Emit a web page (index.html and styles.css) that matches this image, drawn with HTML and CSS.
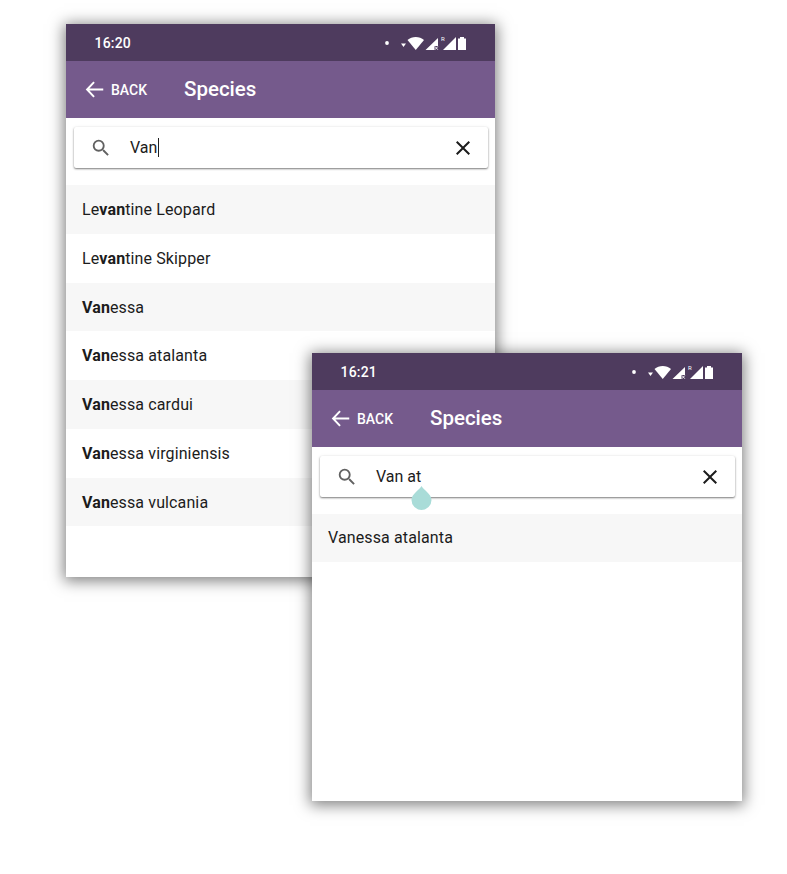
FILE: index.html
```html
<!DOCTYPE html>
<html lang="en">
<head>
<meta charset="utf-8">
<title>Species search</title>
<link rel="stylesheet" href="styles.css">
</head>
<body>
<svg class="defs" width="0" height="0" aria-hidden="true">
  <symbol id="status" viewBox="0 0 84 16">
    <circle cx="3" cy="8" r="1.900" fill="#fff"/>
    <path d="M17 8.500h5l-2.500 3.500z" fill="#fff"/>
    <path d="M23.500 5C28 1 35.500 1 40 5l-8.250 10z" fill="#fff"/>
    <path d="M41.500 15 54 3v8h-3.500v4z" fill="#fff"/>
    <path d="M51 11.500l2.800 3.200M53.800 11.500l-2.800 3.200" stroke="#fff" stroke-width=".9" fill="none"/>
    <path d="M59 15 72 2v13z" fill="#fff"/>
    <path d="M74 3.500h2V2h4v1.500h2V15h-8z" fill="#fff"/>
  </symbol>
  <symbol id="back" viewBox="0 0 24 24">
    <path d="M22 12H3.500M11.500 3.500 3.500 12l8 8.500" fill="none" stroke="currentColor" stroke-width="2.200"/>
  </symbol>
  <symbol id="search" viewBox="0 0 24 24">
    <path d="M15.500 14h-.79l-.28-.27A6.470 6.470 0 0 0 16 9.500 6.500 6.500 0 1 0 9.500 16c1.610 0 3.090-.59 4.230-1.570l.27.28v.79l5 4.990L20.490 19l-4.990-5zm-6 0C7.010 14 5 11.990 5 9.500S7.010 5 9.500 5 14 7.010 14 9.500 11.990 14 9.500 14z" fill="currentColor"/>
  </symbol>
  <symbol id="close" viewBox="0 0 24 24">
    <path d="M19 6.410 17.590 5 12 10.590 6.410 5 5 6.410 10.590 12 5 17.590 6.410 19 12 13.410 17.590 19 19 17.590 13.410 12z" fill="currentColor"/>
  </symbol>
</svg>

<main class="stage">
  <section class="phone phone-first">
    <div class="status">
      <span class="clock">16:20</span>
      <span class="status-icons"><svg class="status-svg"><use href="#status"/></svg><span class="roaming">R</span></span>
    </div>
    <header class="appbar">
      <span class="back"><svg class="back-icon"><use href="#back"/></svg><span class="back-label">BACK</span></span>
      <h1 class="title">Species</h1>
    </header>
    <div class="searchbar">
      <svg class="search-icon"><use href="#search"/></svg>
      <span class="query">Van<span class="caret"></span></span>
      <svg class="close-icon"><use href="#close"/></svg>
    </div>
    <ul class="results">
      <li class="row">Le<b>van</b>tine Leopard</li>
      <li class="row">Le<b>van</b>tine Skipper</li>
      <li class="row"><b>Van</b>essa</li>
      <li class="row"><b>Van</b>essa atalanta</li>
      <li class="row"><b>Van</b>essa cardui</li>
      <li class="row"><b>Van</b>essa virginiensis</li>
      <li class="row"><b>Van</b>essa vulcania</li>
    </ul>
  </section>

  <section class="phone phone-second">
    <div class="status">
      <span class="clock">16:21</span>
      <span class="status-icons"><svg class="status-svg"><use href="#status"/></svg><span class="roaming">R</span></span>
    </div>
    <header class="appbar">
      <span class="back"><svg class="back-icon"><use href="#back"/></svg><span class="back-label">BACK</span></span>
      <h1 class="title">Species</h1>
    </header>
    <div class="searchbar">
      <svg class="search-icon"><use href="#search"/></svg>
      <span class="query">Van at<svg class="handle" viewBox="0 0 20 24"><path d="M10 0C12 4 20 8 20 14a10 10 0 0 1-20 0C0 8 8 4 10 0z"/></svg></span>
      <svg class="close-icon"><use href="#close"/></svg>
    </div>
    <ul class="results">
      <li class="row">Vanessa atalanta</li>
    </ul>
  </section>
</main>
</body>
</html>
```

FILE: styles.css
```css
* {
  box-sizing: border-box;
}

html,
body {
  margin: 0;
  height: 100%;
  background: #fff;
}

body {
  font-family: Roboto, "Liberation Sans", sans-serif;
  color: #1c1c1c;
  overflow: hidden;
}

.defs {
  position: absolute;
}

.stage {
  position: relative;
  width: 787px;
  height: 874px;
}

.phone {
  position: absolute;
  display: flex;
  flex-direction: column;
  background: #fff;
  box-shadow: 0 2px 14px 2px rgba(0, 0, 0, .5);
}

.phone-first {
  left: 66px;
  top: 24px;
  width: 429px;
  height: 553px;
}

.phone-second {
  left: 312px;
  top: 353px;
  width: 430px;
  height: 448px;
}

.status {
  display: flex;
  align-items: center;
  justify-content: space-between;
  flex: none;
  height: 37px;
  padding: 1px 27px 0 28.500px;
  background: #4e3b5e;
  color: #fff;
}

.clock {
  font-size: 14px;
  font-weight: 500;
  letter-spacing: .2px;
}

.status-icons {
  position: relative;
  display: block;
  width: 84px;
  height: 16px;
}

.status-svg {
  display: block;
  width: 84px;
  height: 16px;
}

.roaming {
  position: absolute;
  left: 57px;
  top: 0;
  font-size: 6px;
  line-height: 7px;
}

.appbar {
  display: flex;
  align-items: center;
  flex: none;
  height: 57px;
  padding: 0 0 2px 18px;
  background: #755a8c;
  color: #fff;
}

.back {
  display: flex;
  align-items: center;
  gap: 6px;
  width: 100px;
  margin-top: 2px;
}

.back-icon {
  width: 21px;
  height: 21px;
}

.back-label {
  font-size: 14px;
  font-weight: 500;
}

.title {
  margin: 0;
  font-size: 20.500px;
  font-weight: 500;
  line-height: 24px;
}

.searchbar {
  display: flex;
  align-items: center;
  flex: none;
  height: 41px;
  margin: 9px 7px 0 8px;
  padding: 0 13px 0 16px;
  background: #fff;
  border-radius: 2px;
  box-shadow: 0 1px 2px rgba(0, 0, 0, .5), 0 0 4px rgba(0, 0, 0, .05);
}

.search-icon {
  flex: none;
  width: 22px;
  height: 22px;
  color: #616161;
}

.query {
  position: relative;
  flex: 1;
  margin-left: 18px;
  font-size: 16px;
  line-height: 20px;
}

.caret {
  display: inline-block;
  width: 1px;
  height: 19px;
  margin-left: 1px;
  vertical-align: -4px;
  background: #212121;
}

.handle {
  position: absolute;
  left: 35px;
  top: 19px;
  width: 21px;
  height: 24px;
  fill: #a9dcd8;
}

.close-icon {
  flex: none;
  width: 24px;
  height: 24px;
  color: #1c1c1c;
}

.results {
  flex: 1;
  margin: 17px 0 0;
  padding: 0;
  list-style: none;
}

.row {
  height: 48.750px;
  padding-left: 16px;
  font-size: 16px;
  line-height: 50px;
  letter-spacing: .12px;
}

.phone-second .row {
  height: 48px;
  line-height: 48px;
}

.row:nth-child(odd) {
  background: #f7f7f7;
}

.row b {
  font-weight: 700;
}
```
